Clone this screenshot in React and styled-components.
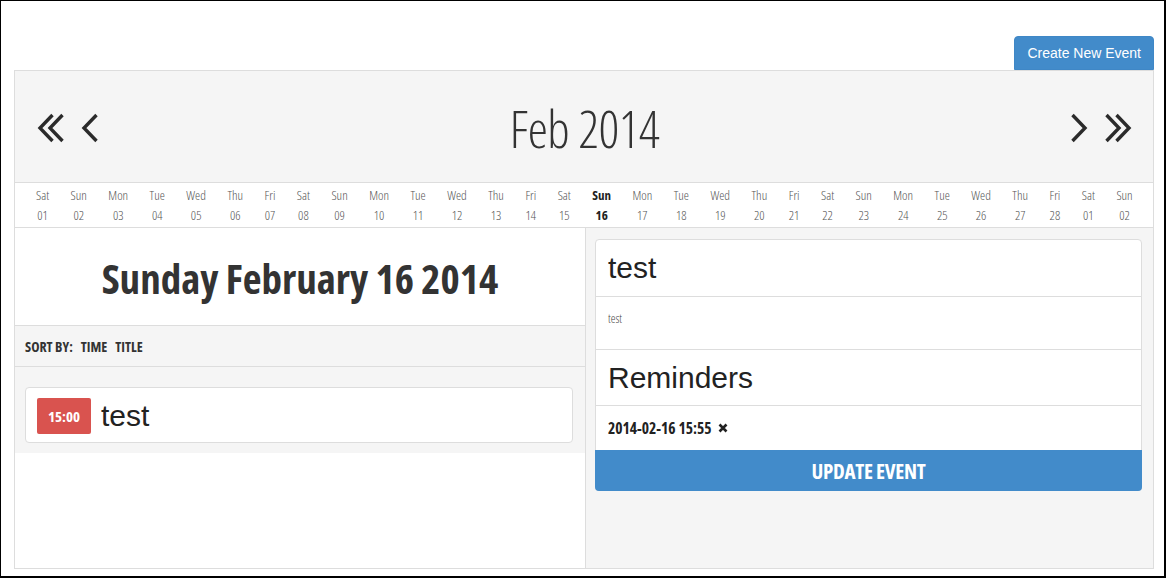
import React from 'react'
import styled, { createGlobalStyle } from 'styled-components'

const GlobalStyle = createGlobalStyle`
  html, body { margin: 0; padding: 0; background: #fff; }
  body { font-family: "Open Sans", "Liberation Sans", sans-serif; color: #333; }
  * { box-sizing: border-box; }
`

const Frame = styled.div`
  width: 1166px;
  height: 578px;
  border: 1px solid #000;
  border-right-width: 2px;
  border-bottom-width: 2px;
  padding: 35px 10px 0 13px;
  display: flex;
  flex-direction: column;
`
const Toolbar = styled.div`
  display: flex;
  justify-content: flex-end;
`
const CreateButton = styled.button`
  height: 34px;
  padding: 0 12px;
  border: 1px solid #3f87c6;
  border-radius: 4px 4px 0 0;
  background: #428bca;
  color: #fff;
  font-family: "Liberation Sans", Arial, sans-serif;
  font-size: 14px;
  cursor: pointer;
`
const Panel = styled.div`
  width: 1140px;
  height: 499px;
  border: 1px solid #ddd;
  display: flex;
  flex-direction: column;
`
const Header = styled.div`
  height: 112px;
  background: #f5f5f5;
  border-bottom: 1px solid #ddd;
  display: flex;
  align-items: center;
  justify-content: space-between;
  padding: 2px 21px 0 22px;
`
const NavGroup = styled.div`
  display: flex;
  align-items: center;
  gap: 16px;
  width: 120px;
  justify-content: ${p => (p.$right ? 'flex-end' : 'flex-start')};
`
const NavIcon = styled.svg`
  display: block;
  cursor: pointer;
`
const MonthTitle = styled.h1`
  margin: 0;
  font-size: 51px;
  font-weight: 300;
  font-stretch: 75%;
  color: #333;
  letter-spacing: -0.5px;
`
const DayStrip = styled.div`
  height: 45px;
  border-bottom: 1px solid #ddd;
  display: flex;
  justify-content: space-between;
  align-items: center;
  padding: 0 20px 0 21px;
`
const Day = styled.div`
  text-align: center;
  font-size: 13px;
  line-height: 20px;
  font-stretch: 75%;
  font-weight: ${p => (p.$active ? 700 : 300)};
  color: ${p => (p.$active ? '#222' : '#555')};
  cursor: pointer;
`
const Body = styled.div`
  flex: 1;
  display: flex;
`
const LeftColumn = styled.div`
  width: 570px;
  display: flex;
  flex-direction: column;
`
const DateTitle = styled.h2`
  margin: 0;
  height: 98px;
  border-bottom: 1px solid #ddd;
  display: flex;
  align-items: center;
  justify-content: center;
  font-size: 41px;
  font-weight: 700;
  font-stretch: 75%;
  color: #333;
  padding-top: 2px;
`
const SortBar = styled.div`
  height: 41px;
  background: #f5f5f5;
  border-bottom: 1px solid #ddd;
  display: flex;
  align-items: center;
  gap: 8px;
  padding: 0 10px;
  font-size: 14px;
  font-weight: 700;
  font-stretch: 75%;
  text-transform: uppercase;
  color: #333;
`
const SortLink = styled.span`
  cursor: pointer;
`
const EventList = styled.div`
  background: #f5f5f5;
  padding: 20px 12px 10px 10px;
`
const EventCard = styled.div`
  height: 56px;
  background: #fff;
  border: 1px solid #ddd;
  border-radius: 4px;
  display: flex;
  align-items: center;
  gap: 10px;
  padding: 2px 11px 0;
`
const TimeBadge = styled.span`
  width: 54px;
  height: 36px;
  border-radius: 2px;
  background: #d9534f;
  color: #fff;
  display: flex;
  align-items: center;
  justify-content: center;
  font-size: 15px;
  font-weight: 700;
  font-stretch: 75%;
`
const EventTitle = styled.span`
  font-family: "Liberation Sans", Arial, sans-serif;
  font-size: 30px;
  color: #222;
`
const RightColumn = styled.div`
  flex: 1;
  background: #f5f5f5;
  border-left: 1px solid #ddd;
  padding: 11px 11px 0 9px;
`
const DetailCard = styled.div`
  background: #fff;
  border: 1px solid #ddd;
  border-radius: 4px;
`
const Section = styled.div`
  height: ${p => p.$h}px;
  border-top: ${p => (p.$first ? 'none' : '1px solid #ddd')};
  padding: 0 12px;
  display: flex;
  align-items: ${p => (p.$top ? 'flex-start' : 'center')};
  padding-top: ${p => (p.$top ? '13px' : '0')};
`
const BigText = styled.div`
  font-family: "Liberation Sans", Arial, sans-serif;
  font-size: 30px;
  color: #222;
`
const SmallText = styled.div`
  font-size: 12px;
  font-weight: 300;
  font-stretch: 75%;
  color: #444;
`
const Reminder = styled.div`
  display: flex;
  align-items: center;
  gap: 6px;
  font-size: 15.5px;
  font-weight: 700;
  font-stretch: 75%;
  color: #222;
`
const UpdateButton = styled.button`
  display: block;
  width: calc(100% + 2px);
  margin: 0 -1px -1px;
  height: 41px;
  border: none;
  border-radius: 0 0 4px 4px;
  background: #428bca;
  color: #fff;
  font-family: "Open Sans", sans-serif;
  font-size: 21px;
  font-weight: 700;
  font-stretch: 75%;
  letter-spacing: -0.3px;
  cursor: pointer;
`

const Chevron = ({ dir = 'left', double }) => {
  const w = double ? 28 : 18
  const flip = dir === 'right' ? `translate(${w} 0) scale(-1 1)` : undefined
  return (
    <NavIcon width={w} height="30" viewBox={`0 0 ${w} 30`}>
      <g transform={flip} fill="none" stroke="#2b2b2b" strokeWidth="3.4" strokeLinejoin="miter">
        <polyline points="15.5,2 3,15 15.5,28" />
        {double && <polyline points="25.5,2 13,15 25.5,28" />}
      </g>
    </NavIcon>
  )
}

const names = ['Sat', 'Sun', 'Mon', 'Tue', 'Wed', 'Thu', 'Fri']
const days = []
for (let i = 0; i < 30; i++) {
  const n = i < 28 ? i + 1 : i - 27
  days.push({ name: names[i % 7], num: String(n).padStart(2, '0'), active: i === 15 })
}

export default function App() {
  return (
    <>
      <GlobalStyle />
      <Frame>
        <Toolbar>
          <CreateButton>Create New Event</CreateButton>
        </Toolbar>
        <Panel>
          <Header>
            <NavGroup>
              <Chevron double />
              <Chevron />
            </NavGroup>
            <MonthTitle>Feb 2014</MonthTitle>
            <NavGroup $right>
              <Chevron dir="right" />
              <Chevron dir="right" double />
            </NavGroup>
          </Header>
          <DayStrip>
            {days.map((d, i) => (
              <Day key={i} $active={d.active}>
                {d.name}
                <br />
                {d.num}
              </Day>
            ))}
          </DayStrip>
          <Body>
            <LeftColumn>
              <DateTitle>Sunday February 16 2014</DateTitle>
              <SortBar>
                <span>Sort by:</span>
                <SortLink>Time</SortLink>
                <SortLink>Title</SortLink>
              </SortBar>
              <EventList>
                <EventCard>
                  <TimeBadge>15:00</TimeBadge>
                  <EventTitle>test</EventTitle>
                </EventCard>
              </EventList>
            </LeftColumn>
            <RightColumn>
              <DetailCard>
                <Section $h={56} $first>
                  <BigText>test</BigText>
                </Section>
                <Section $h={53} $top>
                  <SmallText>test</SmallText>
                </Section>
                <Section $h={56}>
                  <BigText>Reminders</BigText>
                </Section>
                <Section $h={45}>
                  <Reminder>
                    2014-02-16 15:55
                    <svg width="10" height="10" viewBox="0 0 10 10">
                      <path d="M1.5 1.5 L8.5 8.5 M8.5 1.5 L1.5 8.5" stroke="#222" strokeWidth="2.6" />
                    </svg>
                  </Reminder>
                </Section>
                <UpdateButton>UPDATE EVENT</UpdateButton>
              </DetailCard>
            </RightColumn>
          </Body>
        </Panel>
      </Frame>
    </>
  )
}
